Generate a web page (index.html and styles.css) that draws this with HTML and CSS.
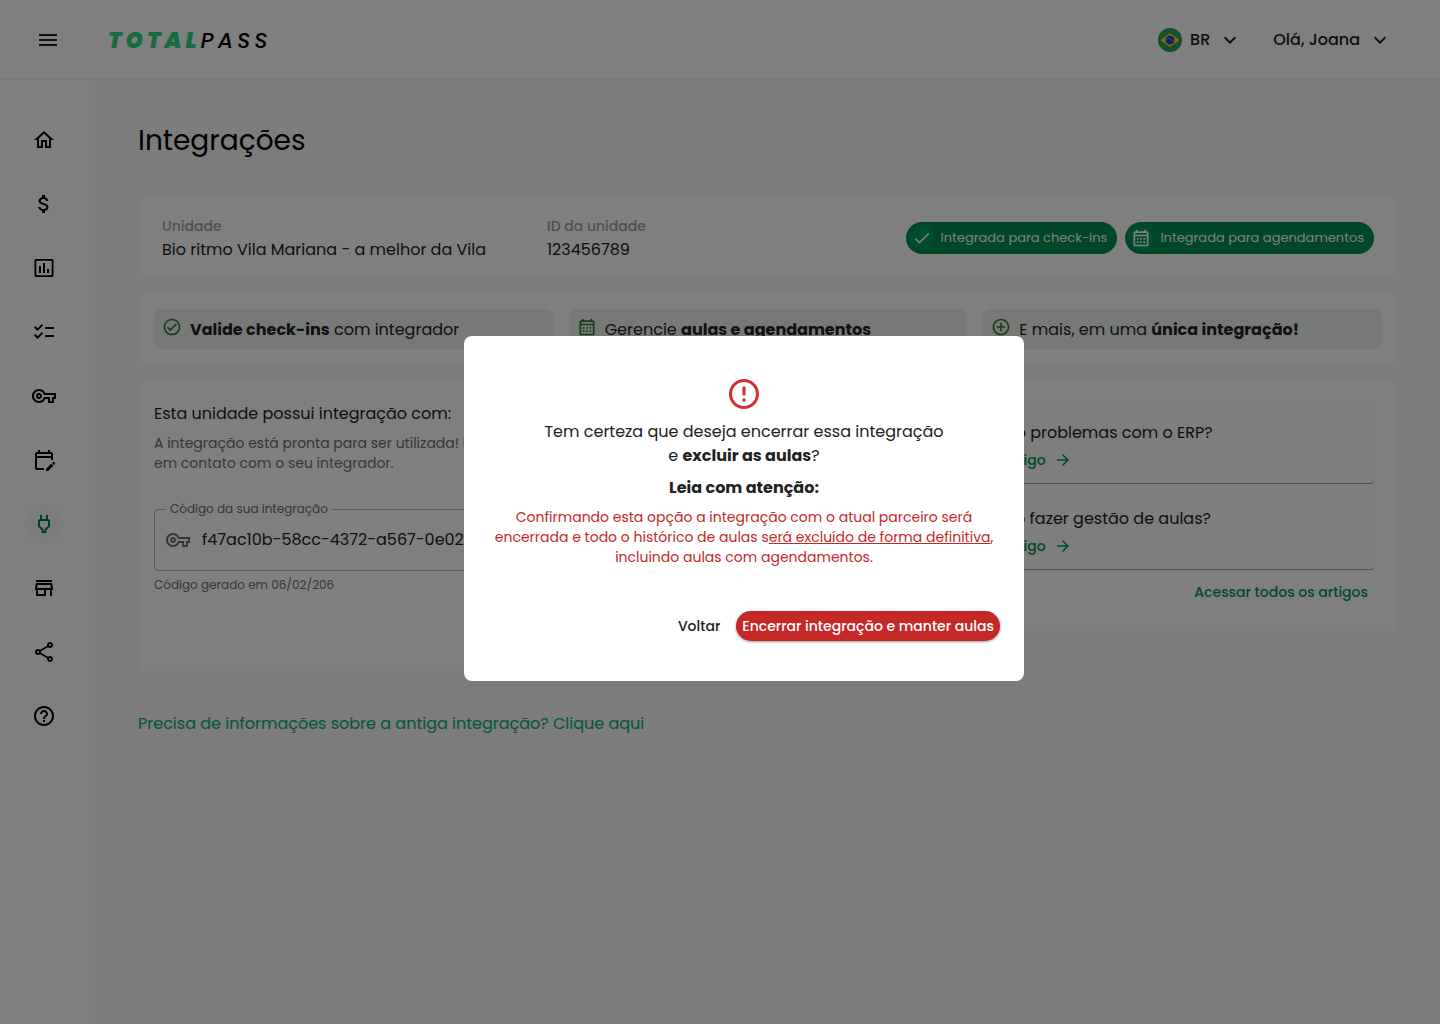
FILE: index.html
```html
<!DOCTYPE html>
<html lang="pt-BR">
<head>
<meta charset="UTF-8" />
<meta name="viewport" content="width=device-width, initial-scale=1" />
<title>Integrações - TotalPass</title>
<link rel="stylesheet" href="styles.css">
</head>
<body>

<!-- ícones reutilizados -->
<svg class="sprite" aria-hidden="true">
  <symbol id="i-key" viewBox="0 0 24 24"><path d="M22 19h-6v-4h-2.68c-1.14 2.42-3.6 4-6.32 4-3.86 0-7-3.14-7-7s3.14-7 7-7c2.72 0 5.17 1.58 6.32 4H24v6h-2v4zm-4-2h2v-4h2v-2H11.94l-.23-.67C11.01 8.34 9.11 7 7 7c-2.76 0-5 2.24-5 5s2.24 5 5 5c2.11 0 4.01-1.34 4.71-3.33l.23-.67H18v4zM7 15c-1.65 0-3-1.35-3-3s1.35-3 3-3 3 1.35 3 3-1.35 3-3 3zm0-4c-.55 0-1 .45-1 1s.45 1 1 1 1-.45 1-1-.45-1-1-1z"/></symbol>
  <symbol id="i-calendar" viewBox="0 0 24 24"><path d="M19 4h-1V2h-2v2H8V2H6v2H5c-1.11 0-1.99.9-1.99 2L3 20c0 1.1.89 2 2 2h14c1.1 0 2-.9 2-2V6c0-1.1-.9-2-2-2zm0 16H5V10h14v10zm0-12H5V6h14v2zM9 14H7v-2h2v2zm4 0h-2v-2h2v2zm4 0h-2v-2h2v2zm-8 4H7v-2h2v2zm4 0h-2v-2h2v2zm4 0h-2v-2h2v2z"/></symbol>
  <symbol id="i-down" viewBox="0 0 24 24"><path d="M7.41 8.59 12 13.17l4.59-4.58L18 10l-6 6-6-6z"/></symbol>
  <symbol id="i-arrow" viewBox="0 0 24 24"><path d="m12 4-1.41 1.41L16.17 11H4v2h12.17l-5.58 5.59L12 20l8-8z"/></symbol>
</svg>

<header class="topbar">
  <button class="icon-btn" type="button" aria-label="Menu">
    <svg class="icon" viewBox="0 0 24 24"><path d="M3 18h18v-2H3v2zm0-5h18v-2H3v2zm0-7v2h18V6H3z"/></svg>
  </button>
  <a class="logo" href="#" aria-label="TotalPass"><b>TOTAL</b><span>PASS</span></a>
  <button class="top-btn lang" type="button">
    <svg class="flag" viewBox="0 0 24 24">
      <circle cx="12" cy="12" r="12" fill="#2e9e57"/>
      <path d="M12 5l9.500 7-9.500 7-9.500-7z" fill="#ffda2c"/>
      <circle cx="12" cy="12" r="4.500" fill="#1a47b8"/>
      <path d="M8 10.500q4.500-.3 8 2.800" fill="none" stroke="#7f97d8" stroke-width=".8"/>
    </svg>
    BR
    <svg class="icon" aria-hidden="true"><use href="#i-down"/></svg>
  </button>
  <button class="top-btn user" type="button">
    Olá, Joana
    <svg class="icon" aria-hidden="true"><use href="#i-down"/></svg>
  </button>
</header>

<div class="layout">
  <nav class="sidebar" aria-label="Principal">
    <a href="#" aria-label="Início"><svg class="icon" viewBox="0 0 24 24"><path d="m12 5.690 5 4.500V18h-2v-6H9v6H7v-7.810l5-4.500M12 3 2 12h3v8h6v-6h2v6h6v-8h3L12 3z"/></svg></a>
    <a href="#" aria-label="Financeiro"><svg class="icon" viewBox="0 0 24 24"><path d="M11.800 10.900c-2.270-.59-3-1.200-3-2.150 0-1.090 1.010-1.850 2.700-1.850 1.780 0 2.440.85 2.500 2.100h2.210c-.07-1.720-1.120-3.300-3.210-3.810V3h-3v2.160c-1.940.42-3.500 1.680-3.500 3.610 0 2.310 1.910 3.460 4.700 4.130 2.500.6 3 1.480 3 2.410 0 .69-.49 1.790-2.700 1.790-2.060 0-2.870-.92-2.980-2.100h-2.200c.12 2.190 1.760 3.420 3.680 3.830V21h3v-2.150c1.950-.37 3.500-1.500 3.500-3.550 0-2.840-2.430-3.810-4.700-4.400z"/></svg></a>
    <a href="#" aria-label="Relatórios"><svg class="icon" viewBox="0 0 24 24"><path fill-rule="evenodd" d="M4 3h16a1.500 1.500 0 0 1 1.500 1.500v15A1.500 1.500 0 0 1 20 21H4a1.500 1.500 0 0 1-1.500-1.500v-15A1.500 1.500 0 0 1 4 3zm.3 1.700v14.600h15.400V4.700zM7 10h2v7H7zm4-3h2v10h-2zm4 6h2v4h-2z"/></svg></a>
    <a href="#" aria-label="Validações"><svg class="icon" viewBox="0 0 24 24"><path d="M22 7h-9v2h9V7zm0 8h-9v2h9v-2zM5.540 11 2 7.460l1.410-1.410 2.120 2.120 4.240-4.240 1.410 1.410L5.540 11zm0 8L2 15.460l1.410-1.410 2.120 2.120 4.240-4.240 1.410 1.410L5.540 19z"/></svg></a>
    <a href="#" aria-label="Acessos"><svg class="icon"><use href="#i-key"/></svg></a>
    <a href="#" aria-label="Agenda"><svg class="icon" viewBox="0 0 24 24"><path d="M5 10h14v2h2V6c0-1.100-.9-2-2-2h-1V2h-2v2H8V2H6v2H5c-1.110 0-1.990.9-1.990 2L3 20c0 1.100.89 2 2 2h7v-2H5V10zm0-4h14v2H5V6zm17.840 10.280-.71.71-2.120-2.120.71-.71c.39-.39 1.020-.39 1.410 0l.71.71c.39.39.39 1.020 0 1.410zm-3.540-.7 2.120 2.120-5.300 5.300H14v-2.120l5.300-5.300z"/></svg></a>
    <a href="#" class="active" aria-label="Integrações" aria-current="page"><svg class="icon" viewBox="0 0 24 24"><path d="M16 9v4.660l-3.500 3.510V19h-1v-1.830L8 13.650V9h8m0-6h-2v4h-4V3H8v4h-.010C6.900 6.990 6 7.890 6 8.980v5.520L9.500 18v3h5v-3l3.500-3.510V9c0-1.100-.9-2-2-2V3z"/></svg></a>
    <a href="#" aria-label="Loja"><svg class="icon" viewBox="0 0 24 24"><path d="m18.360 9 .6 3H5.040l.6-3h12.720M20 4H4v2h16V4zm0 3H4l-1 5v2h1v6h10v-6h4v6h2v-6h1v-2l-1-5zM6 18v-4h6v4H6z"/></svg></a>
    <a href="#" aria-label="Compartilhar"><svg class="icon" viewBox="0 0 24 24"><path d="M18 16.080c-.76 0-1.440.3-1.960.77L8.910 12.700c.05-.23.090-.46.090-.7s-.04-.47-.09-.7l7.050-4.110c.54.5 1.250.81 2.040.81 1.660 0 3-1.340 3-3s-1.340-3-3-3-3 1.340-3 3c0 .24.040.47.090.7L8.040 9.810C7.500 9.310 6.790 9 6 9c-1.660 0-3 1.340-3 3s1.340 3 3 3c.79 0 1.500-.31 2.040-.81l7.120 4.160c-.05.21-.08.43-.08.65 0 1.610 1.310 2.920 2.920 2.920s2.920-1.310 2.920-2.920-1.310-2.920-2.920-2.920zM18 4c.55 0 1 .45 1 1s-.45 1-1 1-1-.45-1-1 .45-1 1-1zM6 13c-.55 0-1-.45-1-1s.45-1 1-1 1 .45 1 1-.45 1-1 1zm12 7.020c-.55 0-1-.45-1-1s.45-1 1-1 1 .45 1 1-.45 1-1 1z"/></svg></a>
    <a href="#" aria-label="Ajuda"><svg class="icon" viewBox="0 0 24 24"><path d="M11 18h2v-2h-2v2zm1-16C6.480 2 2 6.480 2 12s4.480 10 10 10 10-4.480 10-10S17.520 2 12 2zm0 18c-4.410 0-8-3.590-8-8s3.590-8 8-8 8 3.590 8 8-3.590 8-8 8zm0-14c-2.210 0-4 1.790-4 4h2c0-1.100.9-2 2-2s2 .9 2 2c0 2-3 1.750-3 5h2c0-2.250 3-2.500 3-5 0-2.210-1.790-4-4-4z"/></svg></a>
  </nav>

  <main class="content">
    <h1>Integrações</h1>

    <section class="card unit">
      <dl>
        <div class="unit-name"><dt>Unidade</dt><dd>Bio ritmo Vila Mariana - a melhor da Vila</dd></div>
        <div><dt>ID da unidade</dt><dd>123456789</dd></div>
      </dl>
      <div class="badges">
        <span class="badge"><span class="badge-icon"><svg class="icon" viewBox="0 0 24 24"><path d="M9 16.170 4.830 12l-1.420 1.410L9 19 21 7l-1.410-1.410z"/></svg></span>Integrada para check-ins</span>
        <span class="badge"><span class="badge-icon"><svg class="icon"><use href="#i-calendar"/></svg></span>Integrada para agendamentos</span>
      </div>
    </section>

    <section class="card perks">
      <div class="perk"><svg class="icon" viewBox="0 0 24 24"><path d="M12 2C6.480 2 2 6.480 2 12s4.480 10 10 10 10-4.480 10-10S17.520 2 12 2zm0 18c-4.410 0-8-3.590-8-8s3.590-8 8-8 8 3.590 8 8-3.590 8-8 8zm4.590-12.420L10 14.170l-2.590-2.580L6 13l4 4 8-8z"/></svg><p><b>Valide check-ins</b> com integrador</p></div>
      <div class="perk"><svg class="icon"><use href="#i-calendar"/></svg><p>Gerencie <b>aulas e agendamentos</b></p></div>
      <div class="perk"><svg class="icon" viewBox="0 0 24 24"><path d="M13 7h-2v4H7v2h4v4h2v-4h4v-2h-4V7zm-1-5C6.480 2 2 6.480 2 12s4.480 10 10 10 10-4.480 10-10S17.520 2 12 2zm0 18c-4.410 0-8-3.590-8-8s3.590-8 8-8 8 3.590 8 8-3.590 8-8 8z"/></svg><p>E mais, em uma <b>única integração!</b></p></div>
    </section>

    <div class="columns">
      <section class="card integration">
        <h2>Esta unidade possui integração com:</h2>
        <p class="muted">A integração está pronta para ser utilizada! Em caso de dúvidas, entre<br>em contato com o seu integrador.</p>
        <fieldset class="field">
          <legend><label for="code">Código da sua integração</label></legend>
          <svg class="icon" aria-hidden="true"><use href="#i-key"/></svg>
          <input id="code" type="text" value="f47ac10b-58cc-4372-a567-0e02b2c3d479" readonly>
        </fieldset>
        <p class="helper">Código gerado em 06/02/206</p>
      </section>

      <section class="card articles">
        <article class="article">
          <h3>Tendo problemas com o ERP?</h3>
          <a href="#">Ver artigo <svg class="icon" aria-hidden="true"><use href="#i-arrow"/></svg></a>
        </article>
        <article class="article">
          <h3>Como fazer gestão de aulas?</h3>
          <a href="#">Ver artigo <svg class="icon" aria-hidden="true"><use href="#i-arrow"/></svg></a>
        </article>
        <a class="all" href="#">Acessar todos os artigos</a>
      </section>
    </div>

    <a class="old-link" href="#">Precisa de informações sobre a antiga integração? Clique aqui</a>
  </main>
</div>

<div class="backdrop">
  <div class="modal" role="alertdialog" aria-modal="true" aria-labelledby="modalTitle">
    <svg class="alert-icon" viewBox="0 0 24 24"><path d="M11 15h2v2h-2v-2zm0-8h2v6h-2V7zm.990-5C6.470 2 2 6.480 2 12s4.470 10 9.990 10C17.520 22 22 17.520 22 12S17.520 2 11.990 2zM12 20c-4.420 0-8-3.580-8-8s3.580-8 8-8 8 3.580 8 8-3.580 8-8 8z"/></svg>
    <p class="question" id="modalTitle">Tem certeza que deseja encerrar essa integração<br>e <b>excluir as aulas</b>?</p>
    <p class="attention">Leia com atenção:</p>
    <p class="warning">Confirmando esta opção a integração com o atual parceiro será<br>encerrada e todo o histórico de aulas s<u>erá excluído de forma definitiva</u>,<br>incluindo aulas com agendamentos.</p>
    <div class="actions">
      <button class="btn-text" type="button">Voltar</button>
      <button class="btn-danger" type="button">Encerrar integração e manter aulas</button>
    </div>
  </div>
</div>

</body>
</html>
```

FILE: styles.css
```css
* {
  box-sizing: border-box;
}
body {
  margin: 0;
  min-height: 100vh;
  display: flex;
  flex-direction: column;
  background: #f8f8f8;
  color: #212121;
  font-family: Poppins, Inter, "Open Sans", sans-serif;
  font-size: 16px;
  line-height: 24px;
}
h1, h2, h3, p, dl, dd {
  margin: 0;
  font-weight: 400;
}
a {
  color: inherit;
  text-decoration: none;
}
button, input {
  font: inherit;
  color: inherit;
  border: 0;
  background: none;
  padding: 0;
}
button {
  cursor: pointer;
}
b {
  font-weight: 700;
}
.sprite {
  display: none;
}
.icon {
  width: 24px;
  height: 24px;
  fill: currentColor;
  flex: none;
  display: block;
}

/* topo */
.topbar {
  height: 80px;
  padding: 0 48px 0 36px;
  display: flex;
  align-items: center;
  background: #fff;
  border-bottom: 1px solid #f0f0f0;
}
.logo {
  margin: 0 auto 0 48px;
  padding-top: 2px;
  font-size: 22px;
  font-style: italic;
  font-weight: 500;
  letter-spacing: 4px;
  color: #000;
}
.logo b {
  color: #2edb80;
  font-weight: 900;
}
.top-btn {
  display: flex;
  align-items: center;
  font-size: 16px;
  font-weight: 500;
}
.top-btn .icon {
  margin-left: 8px;
}
.lang {
  margin-right: 31px;
}
.flag {
  width: 24px;
  height: 24px;
  margin-right: 8px;
}

/* menu lateral */
.layout {
  flex: 1;
  display: flex;
}
.sidebar {
  width: 96px;
  flex: none;
  padding: 40px 0 0 24px;
  display: flex;
  flex-direction: column;
  gap: 24px;
  background: #fff;
  border-right: 1px solid #f8f8f8;
  color: #000;
}
.sidebar a {
  width: 40px;
  height: 40px;
  display: flex;
  align-items: center;
  justify-content: center;
  border-radius: 50%;
}
.sidebar .active {
  background: #f5faf8;
  color: #00824c;
}

/* conteúdo */
.content {
  flex: 1;
  min-width: 0;
  padding: 40px 42px;
}
h1 {
  margin-bottom: 36px;
  font-size: 28px;
  line-height: 42px;
  color: #000;
}
.card {
  background: #fff;
  border-radius: 8px;
  margin-bottom: 16px;
}
.unit {
  padding: 16px 24px 15px;
  display: flex;
  align-items: center;
  justify-content: space-between;
}
.unit dl {
  display: flex;
}
.unit-name {
  width: 385px;
}
dt {
  font-size: 14px;
  font-weight: 500;
  color: #9e9e9e;
}
.badges {
  display: flex;
  gap: 8px;
}
.badge {
  height: 32px;
  padding: 0 10px 0 4px;
  display: flex;
  align-items: center;
  gap: 7px;
  border-radius: 16px;
  background: #008c50;
  color: #fff;
  font-size: 13px;
}
.badge-icon {
  width: 24px;
  height: 24px;
  display: flex;
  align-items: center;
  justify-content: center;
  border-radius: 50%;
  background: #009c5c;
}
.badge .icon {
  width: 20px;
  height: 20px;
}
.perks {
  padding: 16px;
  display: flex;
  gap: 16px;
}
.perk {
  flex: 1;
  height: 40px;
  padding: 8px;
  display: flex;
  gap: 8px;
  border-radius: 8px;
  background: #edf2eb;
}
.perk p, h2, h3, .old-link {
  font-size: 16px;
  line-height: 26px;
}
.perk .icon {
  width: 20px;
  height: 20px;
  color: #2e7d32;
}
.columns {
  display: flex;
  align-items: flex-start;
  gap: 16px;
}
.integration {
  flex: 1;
  min-height: 290px;
  padding: 20px 16px;
}
.muted {
  margin: 6px 0 30px;
  font-size: 14px;
  line-height: 20px;
  color: #6e6e6e;
}
.field {
  margin: 0;
  padding: 13px 12px 18px 11px;
  min-width: 0;
  display: flex;
  align-items: center;
  gap: 12px;
  border: 1px solid #b4b4b4;
  border-radius: 4px;
}
.field legend {
  padding: 0 4px;
  font-size: 12px;
  line-height: 12px;
  color: #6e6e6e;
}
.field .icon {
  color: #6e6e6e;
}
.field input {
  flex: 1;
}
.helper {
  margin-top: 4px;
  font-size: 12px;
  line-height: 20px;
  color: #6e6e6e;
}
.articles {
  width: 462px;
  padding: 23px 24px;
  display: flex;
  flex-direction: column;
  gap: 7px;
}
.article {
  height: 79px;
  padding: 16px;
  border-radius: 4px;
  background: #fafdfb;
  box-shadow: 0 1px 1px rgba(0, 0, 0, .4);
}
.articles a {
  display: flex;
  align-items: center;
  gap: 8px;
  font-size: 14px;
  font-weight: 500;
  line-height: 28px;
  color: #00964f;
}
.article .icon {
  width: 18px;
  height: 18px;
}
.articles .all {
  align-self: flex-end;
  margin-right: 6px;
  line-height: 32px;
}
.old-link {
  display: inline-block;
  margin-top: 24px;
  color: #00b368;
}

/* modal */
.backdrop {
  position: fixed;
  inset: 0;
  padding: 0 0 7px 48px;
  display: flex;
  align-items: center;
  justify-content: center;
  background: rgba(0, 0, 0, .5);
}
.modal {
  width: 560px;
  padding: 40px 24px;
  border-radius: 8px;
  background: #fff;
  text-align: center;
}
.alert-icon {
  width: 36px;
  height: 36px;
  display: block;
  margin: 0 auto 8px;
  fill: #d32f2f;
}
.attention {
  margin: 8px 0 7px;
  font-weight: 700;
}
.warning {
  font-size: 14px;
  line-height: 20px;
  color: #c62828;
  white-space: nowrap;
}
.actions {
  margin-top: 44px;
  display: flex;
  justify-content: flex-end;
  gap: 16px;
  font-size: 14px;
  font-weight: 500;
}
.btn-danger {
  height: 30px;
  padding: 0 6px;
  border-radius: 15px;
  background: #c62828;
  color: #fff;
  box-shadow: 0 1px 3px rgba(0, 0, 0, .4);
}
```
